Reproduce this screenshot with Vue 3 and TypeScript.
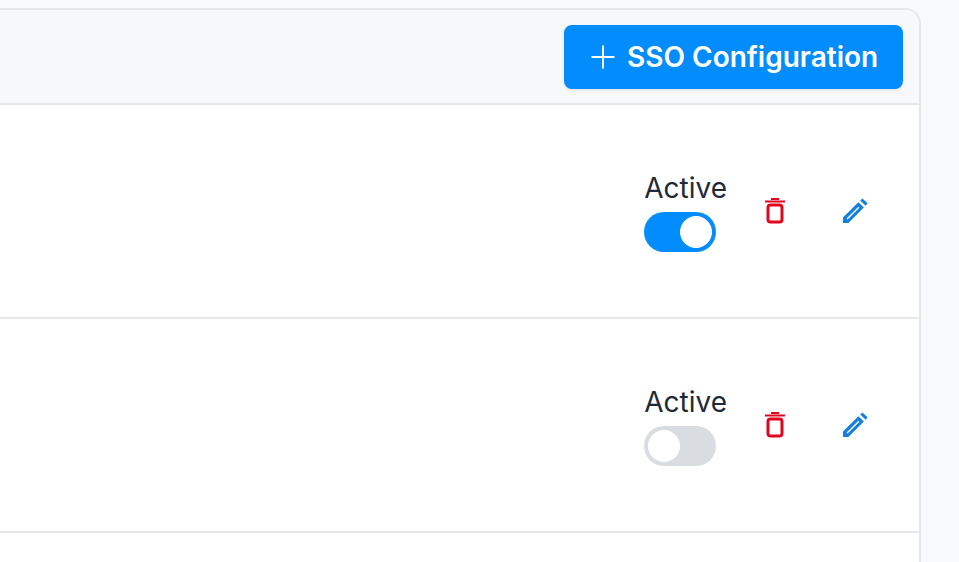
<template>
  <div class="page">
    <div class="card">
      <div class="card-header">
        <button class="add-btn">
          <svg class="plus" viewBox="0 0 24 24" width="24" height="24">
            <path d="M12 0.5V23.5M0.5 12H23.5" stroke="#fff" stroke-width="2" fill="none" />
          </svg>
          <span>SSO Configuration</span>
        </button>
      </div>
      <div v-for="row in rows" :key="row.id" class="row">
        <div class="status">
          <span class="status-label">Active</span>
          <span class="toggle" :class="{ on: row.active }"><span class="knob"></span></span>
        </div>
        <button class="icon-btn trash">
          <svg viewBox="0 0 20 26" width="20" height="26">
            <path d="M6 1H14" stroke="#e0061f" stroke-width="2" fill="none" />
            <path d="M0 3.5H20" stroke="#e0061f" stroke-width="2" fill="none" />
            <rect x="3" y="7" width="14" height="17" rx="2.5" stroke="#e0061f" stroke-width="3" fill="none" />
          </svg>
        </button>
        <button class="icon-btn pencil">
          <svg viewBox="0 0 26 26" width="26" height="26">
            <path d="M1 25V19.6L16.4 4.2L21.8 9.6L6.4 25Z M4.6 20.6L16.4 8.8L17.4 9.8L5.6 21.6Z" fill="#1380e0" fill-rule="evenodd" />
            <path d="M18.2 2.4L20.4 0.4L25.6 5.2L23.6 7.8Z" fill="#1380e0" />
          </svg>
        </button>
      </div>
      <div class="row-rest"></div>
    </div>
  </div>
</template>

<script setup lang="ts">
import { ref } from 'vue'

const rows = ref([
  { id: 1, active: true },
  { id: 2, active: false }
])
</script>

<style scoped>
.page {
  height: 562px;
  overflow: hidden;
  background: #f8f9fb;
  padding: 8px 38px 0 0;
  box-sizing: border-box;
  font-family: Inter, "Liberation Sans", sans-serif;
}

.card {
  border: 2px solid #e5e7eb;
  border-left: none;
  border-bottom: none;
  border-top-right-radius: 16px;
  background: #fff;
  height: 600px;
  overflow: hidden;
}

.card-header {
  box-sizing: border-box;
  background: #f7f8fa;
  border-bottom: 2px solid #e5e7eb;
  height: 95px;
  display: flex;
  justify-content: flex-end;
  align-items: flex-start;
  padding: 15px 16px 0 0;
}

.add-btn {
  width: 339px;
  height: 64px;
  border: none;
  border-radius: 8px;
  background: #038cfc;
  color: #fff;
  font-family: inherit;
  font-size: 28px;
  font-weight: 600;
  display: flex;
  align-items: center;
  gap: 12px;
  padding: 0 0 0 27px;
  box-shadow: 0 1px 3px rgba(0, 0, 0, 0.1);
}

.plus {
  flex: none;
}

.row {
  height: 214px;
  box-sizing: border-box;
  border-bottom: 2px solid #e5e7eb;
  display: flex;
  justify-content: flex-end;
  align-items: flex-start;
  padding: 68px 51px 0 0;
}

.status {
  display: flex;
  flex-direction: column;
  align-items: flex-start;
  margin-right: 38px;
}

.status-label {
  font-size: 28px;
  line-height: 30px;
  color: #1f2a37;
}

.toggle {
  display: block;
  width: 72px;
  height: 40px;
  margin-top: 9px;
  border-radius: 20px;
  background: #d9dce1;
  padding: 4px;
  box-sizing: border-box;
}

.toggle.on {
  background: #038cfc;
  display: flex;
  justify-content: flex-end;
}

.knob {
  display: block;
  width: 32px;
  height: 32px;
  border-radius: 50%;
  background: #fff;
}

.icon-btn {
  border: none;
  background: none;
  padding: 0;
  margin-top: 25px;
  line-height: 0;
}

.trash {
  margin-right: 57px;
}
</style>

<style>
body {
  margin: 0;
}
</style>
